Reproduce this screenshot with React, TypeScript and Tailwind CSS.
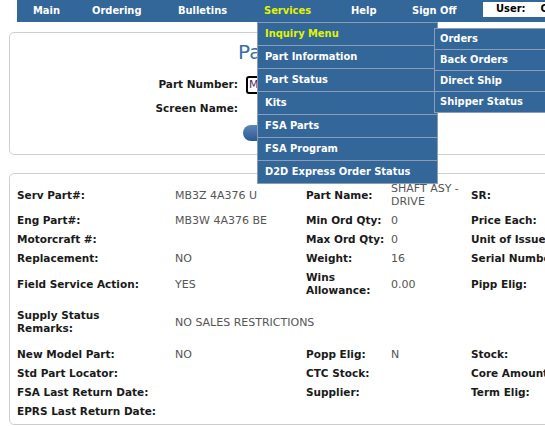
import React from "react";

const navFont = { fontFamily: '"DejaVu Sans Condensed", "DejaVu Sans", sans-serif' };

const NavItem = ({ label, w, active }: { label: string; w: string; active?: boolean }) => (
  <div className={`${w} shrink-0 text-[11px] font-bold ${active ? "text-[#e0f500]" : "text-white"}`}>{label}</div>
);

type Cell = { t?: string; lines?: string[] };

const Label = ({ c }: { c?: Cell }) => {
  if (!c) return <div />;
  return (
    <div className="text-[10.5px] font-bold text-[#1a1a1a] leading-[13px] whitespace-nowrap">
      {c.lines ? c.lines.map((l) => <div key={l}>{l}</div>) : c.t}
    </div>
  );
};

const Value = ({ c }: { c?: Cell }) => {
  if (!c) return <div />;
  return (
    <div className="text-[11px] text-[#555] leading-[13px] whitespace-nowrap">
      {c.lines ? c.lines.map((l) => <div key={l}>{l}</div>) : c.t}
    </div>
  );
};

export default function App() {
  const dropItems = [
    "Inquiry Menu",
    "Part Information",
    "Part Status",
    "Kits",
    "FSA Parts",
    "FSA Program",
    "D2D Express Order Status",
  ];
  const subItems = ["Orders", "Back Orders", "Direct Ship", "Shipper Status"];

  return (
    <div
      className="relative w-[545px] h-[426px] overflow-hidden bg-white"
      style={{ fontFamily: '"DejaVu Sans", Verdana, sans-serif' }}
    >
      {/* Nav bar */}
      <div className="ml-[17px] h-[22px] w-[600px] bg-[#336699] flex items-center pl-[16px]" style={navFont}>
        <NavItem label="Main" w="w-[59px]" />
        <NavItem label="Ordering" w="w-[86px]" />
        <NavItem label="Bulletins" w="w-[86px]" />
        <NavItem label="Services" w="w-[87px]" active />
        <NavItem label="Help" w="w-[61px]" />
        <NavItem label="Sign Off" w="w-[71px]" />
        <div className="self-start mt-[2px] h-[15px] w-[120px] bg-white pl-[13px] flex items-center text-[11px] font-bold text-black whitespace-nowrap">
          <span>User:</span>
          <span className="ml-[15px]">CDLR01</span>
        </div>
      </div>

      {/* Top panel */}
      <div className="mt-[10px] ml-[9px] w-[640px] h-[123px] border border-[#cfcfcf] rounded-[5px] pt-[7px] flex flex-col">
        <div className="pl-[228px] h-[24px] leading-[24px] text-[20px] text-[#3a6ea5] whitespace-nowrap">Part Information</div>
        <div className="mt-[12px] h-[18px] flex items-center">
          <div className="w-[228px] text-right text-[10.5px] font-bold text-[#1a1a1a]">Part Number:</div>
          <div className="ml-[8px] h-[18px] w-[170px] border-2 border-black rounded-[3px] flex items-center pl-[1px] text-[11px] text-[#4a2a6a]">
            MB3Z 4A376 U
          </div>
        </div>
        <div className="mt-[6px] h-[18px] flex items-center">
          <div className="w-[228px] text-right text-[10.5px] font-bold text-[#1a1a1a]">Screen Name:</div>
        </div>
        <div className="mt-[7px] ml-[233px] h-[16px] w-[90px] rounded-full bg-gradient-to-b from-[#5a86bb] to-[#2c5a92]" />
      </div>

      {/* Bottom panel */}
      <div className="mt-[18px] ml-[9px] w-[640px] h-[252px] border border-[#cfcfcf] rounded-[5px] pt-[8px] pl-[7px] flex flex-col">
        <Row h="h-[26px]" l1={{ t: "Serv Part#:" }} v1={{ t: "MB3Z 4A376 U" }} l2={{ t: "Part Name:" }} v2={{ lines: ["SHAFT ASY -", "DRIVE"] }} l3={{ t: "SR:" }} />
        <Row h="h-[19px] mt-[3px]" l1={{ t: "Eng Part#:" }} v1={{ t: "MB3W 4A376 BE" }} l2={{ t: "Min Ord Qty:" }} v2={{ t: "0" }} l3={{ t: "Price Each:" }} />
        <Row h="h-[19px]" l1={{ t: "Motorcraft #:" }} l2={{ t: "Max Ord Qty:" }} v2={{ t: "0" }} l3={{ t: "Unit of Issue:" }} />
        <Row h="h-[19px]" l1={{ t: "Replacement:" }} v1={{ t: "NO" }} l2={{ t: "Weight:" }} v2={{ t: "16" }} l3={{ t: "Serial Number:" }} />
        <Row h="h-[26px] mt-[3px]" l1={{ t: "Field Service Action:" }} v1={{ t: "YES" }} l2={{ lines: ["Wins", "Allowance:"] }} v2={{ t: "0.00" }} l3={{ t: "Pipp Elig:" }} />
        <div className="mt-[12px] h-[26px] grid grid-cols-[158px_1fr] items-center">
          <Label c={{ lines: ["Supply Status", "Remarks:"] }} />
          <Value c={{ t: "NO SALES RESTRICTIONS" }} />
        </div>
        <Row h="h-[19px] mt-[10px]" l1={{ t: "New Model Part:" }} v1={{ t: "NO" }} l2={{ t: "Popp Elig:" }} v2={{ t: "N" }} l3={{ t: "Stock:" }} />
        <Row h="h-[19px]" l1={{ t: "Std Part Locator:" }} l2={{ t: "CTC Stock:" }} l3={{ t: "Core Amount:" }} />
        <Row h="h-[19px]" l1={{ t: "FSA Last Return Date:" }} l2={{ t: "Supplier:" }} l3={{ t: "Term Elig:" }} />
        <Row h="h-[19px]" l1={{ t: "EPRS Last Return Date:" }} />
      </div>

      {/* Services dropdown */}
      <div className="absolute left-[257px] top-[22px] w-[181px] bg-[#336699] border border-[#8a9db3] border-b-0" style={navFont}>
        {dropItems.map((it, i) => (
          <div
            key={it}
            className={`h-[23px] border-b border-[#8a9db3] pl-[7px] flex items-center text-[11px] font-bold whitespace-nowrap ${i === 0 ? "text-[#e0f500]" : "text-white"}`}
          >
            {it}
          </div>
        ))}
      </div>

      {/* Sub menu */}
      <div className="absolute left-[434px] top-[28px] w-[140px] bg-[#336699] border border-[#8a9db3] border-b-0" style={navFont}>
        {subItems.map((it) => (
          <div key={it} className="h-[21px] border-b border-[#8a9db3] pl-[5px] flex items-center text-[11px] font-bold text-white whitespace-nowrap">
            {it}
          </div>
        ))}
      </div>
    </div>
  );
}

function Row({ h, l1, v1, l2, v2, l3 }: { h: string; l1?: Cell; v1?: Cell; l2?: Cell; v2?: Cell; l3?: Cell }) {
  return (
    <div className={`${h} grid grid-cols-[158px_131px_85px_80px_150px] items-center`}>
      <Label c={l1} />
      <Value c={v1} />
      <Label c={l2} />
      <Value c={v2} />
      <Label c={l3} />
    </div>
  );
}
